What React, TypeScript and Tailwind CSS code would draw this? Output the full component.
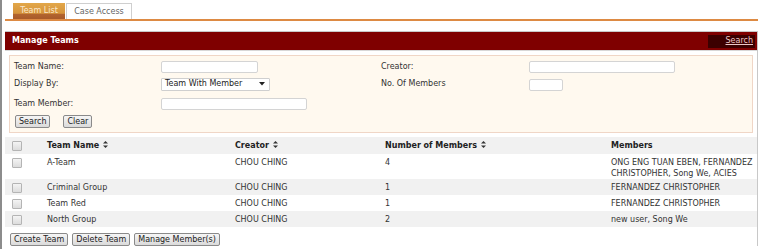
import React from "react";

const F = "font-['DejaVu_Sans',Verdana,sans-serif]";

function SortIcon() {
  return (
    <svg width="5" height="7" viewBox="0 0 5 7" className="inline-block ml-[4px] align-[0px]">
      <path d="M2.5 0 L5 2.5 L0 2.5 Z" fill="#333" />
      <path d="M2.5 7 L5 4.5 L0 4.5 Z" fill="#333" />
    </svg>
  );
}

function Checkbox() {
  return (
    <div className="w-[10px] h-[10px] border border-[#b4b4b4] bg-[linear-gradient(#f4f4f4,#dcdcdc)] rounded-[1px]" />
  );
}

function Btn({ children }: { children: React.ReactNode }) {
  return (
    <button className="h-[13px] px-[3px] border border-[#8a8a8a] rounded-[2px] bg-[linear-gradient(#f6f6f6,#dadada)] text-[8px] leading-[11px] text-[#222]">
      {children}
    </button>
  );
}

function Input({ w }: { w: string }) {
  return <div className={`${w} h-[12px] bg-white border border-[#d4d4d4] rounded-[2px]`} />;
}

const rows = [
  { name: "A-Team", creator: "CHOU CHING", n: "4", members: "ONG ENG TUAN EBEN, FERNANDEZ CHRISTOPHER, Song We, ACIES", gray: false, tall: true },
  { name: "Criminal Group", creator: "CHOU CHING", n: "1", members: "FERNANDEZ CHRISTOPHER", gray: true },
  { name: "Team Red", creator: "CHOU CHING", n: "1", members: "FERNANDEZ CHRISTOPHER", gray: false },
  { name: "North Group", creator: "CHOU CHING", n: "2", members: "new user, Song We", gray: true },
];

export default function App() {
  return (
    <div className={`${F} w-[758px] h-[249px] bg-white border-l-2 border-[#8c8c8c] text-[8px] text-[#333] overflow-hidden`}>
      {/* Tabs */}
      <div className="pt-[3px] pl-[3px]">
        <div className="flex pl-[8px] h-[16px]">
          <div className="w-[52px] h-[16px] flex items-center justify-center text-[#fbe8cc] bg-[linear-gradient(#e2a74a_0%,#d6943b_65%,#b3652f_68%,#a85a2a_100%)]">
            Team List
          </div>
          <div className="ml-[1px] w-[66px] h-[16px] flex items-center justify-center text-[#666] bg-white border border-b-0 border-[#cfcfcf]">
            Case Access
          </div>
        </div>
        <div className="h-[2px] bg-[#dd8a43]" />
      </div>

      {/* Panel */}
      <div className="ml-[3px] mt-[10px] border-t border-r border-[#c8c8c8]">
        <div className="h-[18px] bg-[#7f0000] flex items-center justify-between pl-[7px] pr-[2px]">
          <span className="text-white font-bold">Manage Teams</span>
          <span className="h-[13px] w-[47px] bg-[#3c0000] flex items-center justify-end pr-[2px] text-[#ecc8c8] underline">
            Search
          </span>
        </div>
        <div className="border-t border-[#d8d8d8] pt-[4px] px-[4px]">
          {/* Filter box */}
          <div className="bg-[#fff9ef] border border-[#f0d6c6] pt-[3px] pb-[4px] pl-[4px]">
            <div className="grid grid-cols-[147px_220px_148px_1fr]">
              <div className="h-[16px] flex items-center">Team Name:</div>
              <div className="h-[16px] flex items-center"><Input w="w-[97px]" /></div>
              <div className="h-[16px] flex items-center">Creator:</div>
              <div className="h-[16px] flex items-center"><Input w="w-[146px]" /></div>

              <div className="h-[18px] flex items-center">Display By:</div>
              <div className="h-[18px] flex items-center">
                <div className="w-[109px] h-[13px] bg-white border border-[#cfcfcf] rounded-[1px] flex items-center justify-between pl-[3px] pr-[4px] text-[#222]">
                  <span>Team With Member</span>
                  <svg width="6" height="4" viewBox="0 0 6 4"><path d="M0 0 L6 0 L3 3.5 Z" fill="#222" /></svg>
                </div>
              </div>
              <div className="h-[18px] flex items-center">No. Of Members</div>
              <div className="h-[18px] flex items-center pt-[2px]"><Input w="w-[34px]" /></div>

              <div className="h-[21px] flex items-center">Team Member:</div>
              <div className="h-[21px] flex items-center"><Input w="w-[146px]" /></div>
              <div />
              <div />
            </div>
            <div className="flex gap-[13px] h-[14px] items-center pl-[1px]">
              <Btn>Search</Btn>
              <Btn>Clear</Btn>
            </div>
          </div>

          {/* Table */}
          <div className="-mx-[4px] mt-[4px]">
            <div className="grid grid-cols-[37px_188px_150px_226px_1fr] h-[17px] items-center bg-[#f1f1f1] font-bold text-[#222]">
              <div className="pl-[7px]"><Checkbox /></div>
              <div className="pl-[5px]">Team Name<SortIcon /></div>
              <div className="pl-[5px]">Creator<SortIcon /></div>
              <div className="pl-[5px]">Number of Members<SortIcon /></div>
              <div className="pl-[5px]">Members</div>
            </div>
            {rows.map((r) => (
              <div
                key={r.name}
                className={`grid grid-cols-[37px_188px_150px_226px_1fr] leading-[11px] ${r.gray ? "bg-[#f1f1f1]" : "bg-white"} ${r.tall ? "pt-[3px] pb-0" : "pt-[3px] pb-[2px]"}`}
              >
                <div className="pl-[7px] pt-[1px]"><Checkbox /></div>
                <div className="pl-[5px]">{r.name}</div>
                <div className="pl-[5px]">{r.creator}</div>
                <div className="pl-[5px]">{r.n}</div>
                <div className="pl-[5px] pr-[4px]">{r.members}</div>
              </div>
            ))}
            <div className="flex gap-[4px] mt-[6px] pl-[5px]">
              <Btn>Create Team</Btn>
              <Btn>Delete Team</Btn>
              <Btn>Manage Member(s)</Btn>
            </div>
          </div>
        </div>
      </div>
    </div>
  );
}
